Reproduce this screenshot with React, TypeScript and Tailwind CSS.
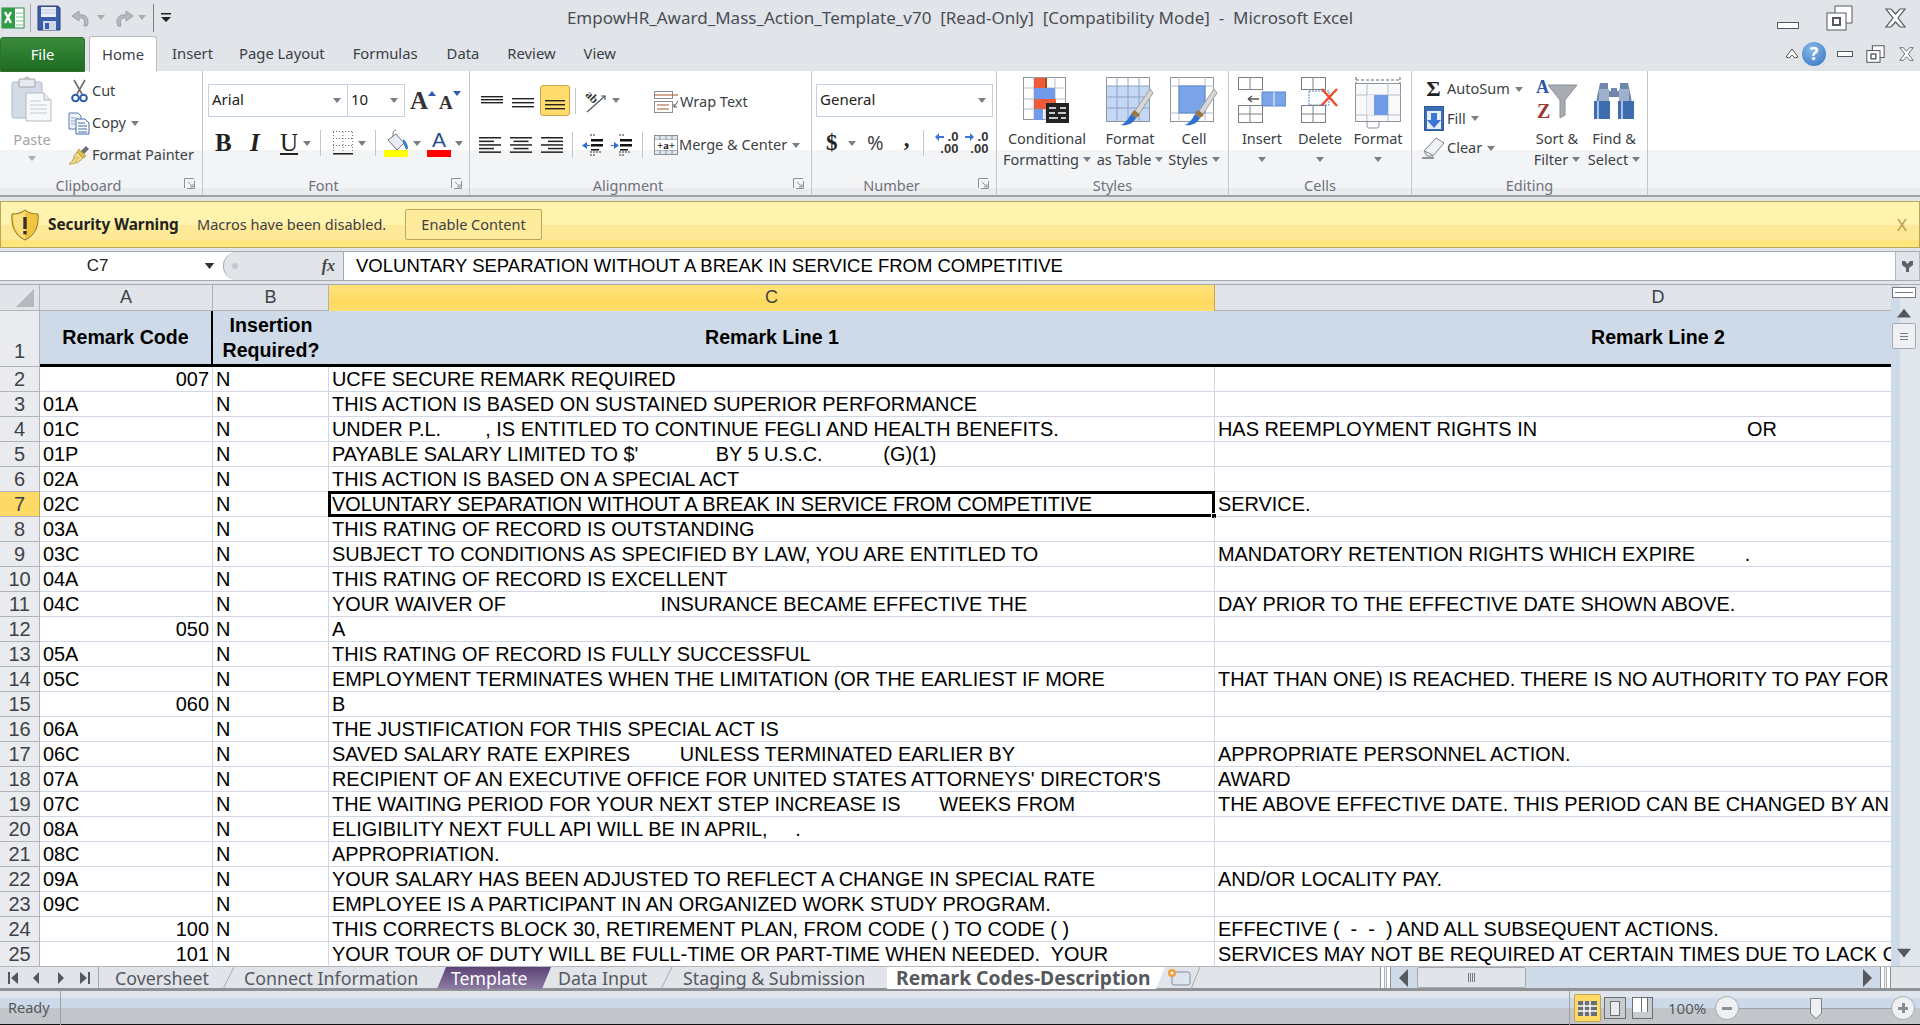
import React from 'react';

const UI = "font-['Noto_Sans',sans-serif]";

// small grey drop-down triangle used all over the ribbon
const Caret = ({ className = '', color = '#7b7e83' }: { className?: string; color?: string }) => (
  <svg width="8" height="5" viewBox="0 0 8 5" className={`shrink-0 ${className}`}>
    <path d="M0 0h8L4 5z" fill={color} />
  </svg>
);

const Launcher = () => (
  <svg width="11" height="11" viewBox="0 0 11 11" className="absolute right-[7px] top-[3px]">
    <path d="M.5 10V.5H10M3 10.5h7.5V3M4 4l5 5M9 6v3H6" fill="none" stroke="#8d9096" />
  </svg>
);

const Lines = ({ rows, w = 22 }: { rows: number[]; w?: number }) => (
  <svg width={w} height="18" viewBox={`0 0 ${w} 18`}>
    {rows.map((y, i) => (
      <rect key={i} x={0} y={y} width={w} height="1.4" fill="#222" />
    ))}
  </svg>
);

const AlignLines = ({ kind }: { kind: 'l' | 'c' | 'r' }) => {
  const widths = [22, 15, 22, 15, 22];
  return (
    <svg width="22" height="18" viewBox="0 0 22 18">
      {widths.map((w, i) => (
        <rect key={i} x={kind === 'l' ? 0 : kind === 'r' ? 22 - w : (22 - w) / 2} y={1 + i * 3.6} width={w} height="1.5" fill="#222" />
      ))}
    </svg>
  );
};

const ExcelIcon = () => (
  <svg width="24" height="24" viewBox="0 0 24 24">
    <rect x="1" y="2" width="22" height="20" fill="#fff" stroke="#2d8a3e" />
    <rect x="1" y="2" width="13" height="20" fill="#2f9c46" />
    <path d="M4 6l6 11M10 6L4 17" stroke="#fff" strokeWidth="2.4" />
    <path d="M15 7h7M15 11h7M15 15h7M15 19h7" stroke="#7cc48a" />
  </svg>
);

const SaveIcon = () => (
  <svg width="24" height="26" viewBox="0 0 24 26">
    <path d="M1 1h20l2 2v22H1z" fill="#3c5ea8" stroke="#28407c" />
    <rect x="4" y="2" width="15" height="10" fill="#e8edf7" />
    <path d="M4 5h15M4 8h15" stroke="#b7c5e0" />
    <rect x="6" y="16" width="13" height="9" fill="#cfd8ea" />
    <rect x="8" y="18" width="4" height="6" fill="#3c5ea8" />
  </svg>
);

const UndoIcon = ({ flip = false }: { flip?: boolean }) => (
  <svg width="20" height="20" viewBox="0 0 20 20" className={flip ? '-scale-x-100' : ''}>
    <path d="M17 18c3-7-1-12-8-11V3L2 8l7 5V10c4-1 7 2 5 8z" fill="#b6b9bd" stroke="#9a9da2" />
  </svg>
);

const ClipboardIcon = () => (
  <svg width="42" height="46" viewBox="0 0 42 46">
    <rect x="1" y="6" width="30" height="36" rx="2" fill="#d3dbe7" stroke="#aeb8c6" />
    <rect x="8" y="3" width="16" height="8" rx="1" fill="#e8e9ec" stroke="#a0a4aa" />
    <path d="M14 3a2 2 0 0 1 4 0" fill="none" stroke="#a0a4aa" />
    <path d="M15 17h18l7 7v21H15z" fill="#f7f8fa" stroke="#b5b9c0" />
    <path d="M33 17v7h7" fill="#e6e8ec" stroke="#b5b9c0" />
    <path d="M19 25h11M19 29h17M19 33h17M19 37h17" stroke="#c7cbd1" />
  </svg>
);

const ScissorsIcon = () => (
  <svg width="17" height="24" viewBox="0 0 17 24">
    <path d="M3 1l8 14M14 1L6 15" stroke="#6a6d72" strokeWidth="1.6" />
    <circle cx="4.5" cy="19" r="3.3" fill="none" stroke="#2d5cae" strokeWidth="2" />
    <circle cx="12.5" cy="19" r="3.3" fill="none" stroke="#2d5cae" strokeWidth="2" />
  </svg>
);

const CopyIcon = () => (
  <svg width="22" height="23" viewBox="0 0 22 23">
    <path d="M1 1h9l3 3v13H1z" fill="#eef1f6" stroke="#5f7fb3" />
    <path d="M8 7h9l4 4v11H8z" fill="#fff" stroke="#3f67a9" />
    <path d="M10 11h7M10 14h9M10 17h9M10 20h9" stroke="#3f67a9" />
    <path d="M3 6h5M3 9h4M3 12h4" stroke="#8da5cb" />
  </svg>
);

const PainterIcon = () => (
  <svg width="22" height="20" viewBox="0 0 22 20">
    <path d="M13 6l5-5 3 3-5 5z" fill="#6d6f74" />
    <path d="M11 4l7 7-3 2-6-6z" fill="#e2c04c" stroke="#9c7f24" strokeWidth=".6" />
    <path d="M9 7l6 6c-3 4-8 6-14 6 3-2 5-5 5-8z" fill="#f2dd8b" stroke="#a48a3a" strokeWidth=".7" />
    <path d="M4 16l5-5M7 17l4-5" stroke="#b79b3f" strokeWidth=".7" />
  </svg>
);

const BorderIcon = () => (
  <svg width="20" height="24" viewBox="0 0 20 24">
    <path d="M.5 1v20M19.5 1v20M10 1v20M0 .5h20M0 7.5h20M0 14.5h20" stroke="#777" strokeDasharray="1 2" fill="none" />
    <rect y="22" width="20" height="1.5" fill="#222" />
  </svg>
);

const FillIcon = () => (
  <svg width="26" height="28" viewBox="0 0 26 28">
    <path d="M12 1c-2 0-3 2-3 4v4" fill="none" stroke="#777" />
    <path d="M4 11l8-6 8 9-7 7z" fill="#e9edf3" stroke="#6f7680" />
    <path d="M19 10c3 2 5 6 5 9 0 2-3 2-3-1l-2-4z" fill="#3c7ed0" />
    <rect y="21" width="24" height="7" fill="#ffff00" />
  </svg>
);

const OrientIcon = () => (
  <svg width="24" height="24" viewBox="0 0 24 24" className="overflow-visible">
    <text x="2" y="11" fontFamily="Liberation Serif, serif" fontWeight="700" fontSize="12" fill="#333" transform="rotate(45 7 7)">ab</text>
    <path d="M3 23L21 7" stroke="#555" strokeWidth="1.2" />
    <path d="M17 7h4v4" fill="none" stroke="#555" strokeWidth="1.2" />
  </svg>
);

const IndentIcon = ({ right = false }: { right?: boolean }) => (
  <svg width="22" height="22" viewBox="0 0 22 22">
    <path d="M8 1h6M8 21h6M8 18h12" stroke="#333" strokeDasharray="2 1" />
    <rect x="9" y="5" width="12" height="2.5" fill="#111" />
    <rect x="9" y="10" width="12" height="2.5" fill="#111" />
    <rect x="9" y="15" width="8" height="1.5" fill="#111" />
    <path d={right ? 'M0 11h3V8l5 3.5L3 15v-3H0z' : 'M8 11H5V8L0 11.5 5 15v-3h3z'} fill="#2f6fd0" />
  </svg>
);

const WrapIcon = () => (
  <svg width="25" height="22" viewBox="0 0 25 22">
    <rect x=".5" y=".5" width="18" height="7" fill="#fff" stroke="#8a8f96" />
    <path d="M0 4h24" stroke="#a9532a" />
    <rect x=".5" y="10.5" width="18" height="11" fill="#fff" stroke="#8a8f96" />
    <path d="M3 14h12M3 18h12" stroke="#a9532a" />
    <path d="M24 10l-4 6M20 13v3h3" fill="none" stroke="#555" />
  </svg>
);

const MergeIcon = () => (
  <svg width="24" height="20" viewBox="0 0 24 20">
    <rect x=".5" y=".5" width="23" height="19" fill="#dfe5ee" stroke="#8b9098" />
    <path d="M0 5h24M0 15h24M6 0v5M12 0v5M18 0v5M6 15v5M12 15v5M18 15v5" stroke="#8b9098" />
    <rect x="1" y="5" width="22" height="10" fill="#fff" />
    <text x="12" y="14" textAnchor="middle" fontFamily="Liberation Serif, serif" fontWeight="700" fontSize="11" fill="#222">+a+</text>
  </svg>
);

const DecimalIcon = ({ more }: { more: boolean }) => (
  <div className="relative w-[23px] h-[24px] font-['Liberation_Sans',sans-serif] text-[13px] leading-[12px] font-bold text-[#333] text-right">
    <svg width="9" height="8" viewBox="0 0 9 8" className="absolute left-0 top-[2px]">
      <path d={more ? 'M0 3h5V0l4 4-4 4V5H0z' : 'M9 3H4V0L0 4l4 4V5h5z'} fill="#3a78d6" />
    </svg>
    <div>.0</div>
    <div>.00</div>
  </div>
);

const CondIcon = () => (
  <svg width="48" height="46" viewBox="0 0 48 46">
    <rect x=".5" y=".5" width="42" height="42" fill="#fff" stroke="#8e949b" />
    <path d="M11 0v43M22 0v43M32 0v43M0 11h43M0 22h43M0 32h43" stroke="#b7bdc5" />
    <rect x="11" y="1" width="11" height="10" fill="#ef5a38" />
    <rect x="22" y="1" width="2" height="10" fill="#a84a1a" />
    <rect x="11" y="11" width="21" height="11" fill="#6f9be8" />
    <rect x="11" y="22" width="22" height="10" fill="#ef5a38" />
    <rect x="11" y="32" width="9" height="11" fill="#6f9be8" />
    <rect x="23" y="26" width="23" height="20" fill="#222" />
    <path d="M26 31h7M37 31h6M26 36h6M35 36h8M26 41h9M38 41h5" stroke="#fff" strokeWidth="1.6" />
  </svg>
);

const TableBrushIcon = ({ cell = false }: { cell?: boolean }) => (
  <svg width="48" height="50" viewBox="0 0 48 50">
    <rect x=".5" y=".5" width="43" height="44" fill="#fff" stroke="#8e949b" />
    {cell ? (
      <>
        <path d="M0 9h44M0 36h44M9 0v45M35 0v45" stroke="#b7bdc5" />
        <rect x="9" y="9" width="26" height="27" fill="#7ba3e8" stroke="#5a85cf" />
      </>
    ) : (
      <>
        <rect x="1" y="9" width="42" height="35" fill="#c4d7f5" />
        <path d="M0 9h44M0 20h44M0 31h44M11 0v45M22 0v45M33 0v45" stroke="#8fa2be" />
      </>
    )}
    <path d="M44 12L29 34l4 3 14-21z" fill="#d8d8d8" stroke="#9b9b9b" />
    <path d="M28 33l6 5-4 3-5-4z" fill="#9d7540" />
    <path d="M25 37l5 4c-3 6-10 8-15 7 4-2 7-5 10-11z" fill="#2f6fd0" />
  </svg>
);

const InsertIcon = () => (
  <svg width="48" height="46" viewBox="0 0 48 46">
    <rect x=".5" y=".5" width="24" height="12" fill="#fff" stroke="#7c8188" />
    <path d="M12 0v13" stroke="#7c8188" />
    <rect x="24" y="15" width="24" height="14" fill="#7ba3e8" stroke="#5a85cf" />
    <path d="M36 15v14" stroke="#fff" />
    <path d="M10 22h11M10 22l4-3M10 22l4 3" stroke="#555" fill="none" strokeWidth="1.4" />
    <rect x=".5" y="28.5" width="24" height="17" fill="#fff" stroke="#7c8188" />
    <path d="M12 28v18M0 37h24" stroke="#7c8188" />
  </svg>
);

const DeleteIcon = () => (
  <svg width="38" height="46" viewBox="0 0 38 46">
    <rect x=".5" y=".5" width="24" height="12" fill="#fff" stroke="#7c8188" />
    <path d="M12 0v13" stroke="#7c8188" />
    <rect x="8" y="14" width="20" height="14" fill="#fff" stroke="#5a85cf" strokeDasharray="2 1" />
    <path d="M21 12l15 17M36 12L20 29" stroke="#ee4b2b" strokeWidth="2.4" />
    <rect x=".5" y="28.5" width="24" height="17" fill="#fff" stroke="#7c8188" />
    <path d="M12 28v18M0 37h24" stroke="#7c8188" />
  </svg>
);

const FormatIcon = () => (
  <svg width="46" height="52" viewBox="0 0 46 52">
    <path d="M1 0v6M45 0v6M1 3h44" stroke="#666" strokeDasharray="3 2" />
    <rect x=".5" y="6.5" width="45" height="38" fill="#f8f9fb" stroke="#8e949b" />
    <path d="M12 6v38M33 6v38M0 18h46M0 38h46" stroke="#b7bdc5" />
    <rect x="12" y="18" width="21" height="20" fill="#f0f3f8" />
    <rect x="19" y="18" width="14" height="20" fill="#6f9be8" />
    <path d="M12 44v5a2 2 0 0 0 2 2h8a2 2 0 0 0 2-2v-4" fill="none" stroke="#8e949b" />
  </svg>
);

const FillDownIcon = () => (
  <svg width="20" height="25" viewBox="0 0 20 25">
    <rect x=".5" y=".5" width="19" height="24" fill="#3d6eb5" stroke="#2f5a98" />
    <rect x="3" y="5" width="14" height="18" fill="#e9eef6" />
    <path d="M7 7h6v7h4l-7 8-7-8h4z" fill="#3c76d6" />
  </svg>
);

const EraserIcon = () => (
  <svg width="23" height="22" viewBox="0 0 23 22">
    <path d="M2 14L14 1l8 5-11 13H5z" fill="#f0f2f5" stroke="#7c8592" />
    <path d="M2 14l7 3 2 2" fill="none" stroke="#7c8592" />
    <path d="M0 21h12" stroke="#333" />
  </svg>
);

const SortIcon = () => (
  <svg width="42" height="46" viewBox="0 0 42 46">
    <path d="M12 8h29L29 23v15l-5 3V23z" fill="#a7acb3" stroke="#8c9197" />
    <text x="0" y="16" fontFamily="Liberation Serif, serif" fontWeight="700" fontSize="18" fill="#2a55a5">A</text>
    <text x="1" y="41" fontFamily="Liberation Serif, serif" fontWeight="700" fontSize="20" fill="#9d3b33">Z</text>
  </svg>
);

const BinocularsIcon = () => (
  <svg width="44" height="44" viewBox="0 0 44 44">
    <path d="M8 6h8v8h3v-3h6v3h3V6h8l3 14 3 22H28V20H16v22H2l3-22z" fill="#6f86ad" />
    <rect x="2" y="24" width="16" height="18" fill="#3f6cae" />
    <rect x="26" y="24" width="16" height="18" fill="#3f6cae" />
    <path d="M6 24v18M30 24v18" stroke="#a9c2e7" strokeWidth="2" />
    <rect x="7" y="12" width="10" height="12" fill="#9db0cc" />
    <rect x="27" y="12" width="10" height="12" fill="#9db0cc" />
  </svg>
);

const WinMin = ({ w, h }: { w: number; h: number }) => (
  <div style={{ width: w, height: h }} className="bg-white border border-[#55585d]" />
);

const WinRestore = ({ big = false }: { big?: boolean }) => (
  <svg width={big ? 27 : 19} height={big ? 26 : 18} viewBox="0 0 27 26">
    <path d="M9 8V1h17v17h-6" fill="#fff" stroke="#55585d" strokeWidth={big ? 1 : 1.5} />
    <rect x="1" y="8" width="19" height="17" fill="#fff" stroke="#55585d" strokeWidth={big ? 1 : 1.5} />
    <rect x="7" y="13" width="7" height="7" fill="none" stroke="#55585d" strokeWidth="2" />
  </svg>
);

const WinClose = ({ big = false }: { big?: boolean }) => (
  <svg width={big ? 23 : 17} height={big ? 20 : 14} viewBox="0 0 23 20">
    <path d="M2 1h5l4.500 5L16 1h5l-7 9 7 9h-5l-4.500-5L7 19H2l7-9z" fill="#fff" stroke="#55585d" strokeWidth="1.2" />
  </svg>
);

const ShieldIcon = () => (
  <svg width="28" height="32" viewBox="0 0 28 32">
    <path d="M14 1c4 3 8 4 13 4 1 11-2 21-13 26C3 26 0 16 1 5c5 0 9-1 13-4z" fill="#f3c33f" stroke="#8b7a35" />
    <path d="M14 2v28C5 25 2 16 2 6c5 0 8-1 12-4z" fill="#fbe07f" />
    <rect x="12.300" y="8" width="3.400" height="12" fill="#333" />
    <rect x="12.300" y="22" width="3.400" height="3.400" fill="#333" />
  </svg>
);

const Small = ({ icon, label, caret, iconW = 26, h = 32 }: { icon: React.ReactNode; label: string; caret?: boolean; iconW?: number; h?: number }) => (
  <div className="flex items-center" style={{ height: h }}>
    <div className="flex justify-center shrink-0" style={{ width: iconW }}>{icon}</div>
    <span className="text-[14.5px] text-[#3b3f46] whitespace-nowrap">{label}</span>
    {caret && <Caret className="ml-[5px]" />}
  </div>
);

const Big = ({ icon, l1, l2, caretOnly, w }: { icon: React.ReactNode; l1: string; l2?: string; caretOnly?: boolean; w: string }) => (
  <div className={`flex flex-col items-center ${w}`}>
    <div className="h-[53px] pt-[6px] flex justify-center">{icon}</div>
    <div className="h-[21px] leading-[21px] text-[14.5px] text-[#3b3f46] whitespace-nowrap mt-[4px]">{l1}</div>
    <div className="h-[21px] flex items-center justify-center text-[14.5px] text-[#3b3f46] whitespace-nowrap">
      {l2}
      {(l2 || caretOnly) && <Caret className={l2 ? 'ml-[4px]' : ''} />}
    </div>
  </div>
);

const Group = ({ label, w, launcher, children }: { label: string; w: string; launcher?: boolean; children: React.ReactNode }) => (
  <div className={`${w} shrink-0 h-full flex flex-col border-r border-[#c2c5ca]`}>
    <div className="h-[104px]">{children}</div>
    <div className={`relative h-[20px] leading-[20px] text-center text-[14.5px] text-[#6e7279] ${launcher ? 'pr-[25px]' : ''}`}>
      {label}
      {launcher && <Launcher />}
    </div>
  </div>
);

const VSep = ({ ml = '' }: { ml?: string }) => <div className={`w-px h-[26px] bg-[#c2c5ca] ${ml}`} />;

const Combo = ({ text, w }: { text: string; w: string }) => (
  <div className={`${w} h-[33px] bg-white border border-[#c3d1e2] flex items-center justify-between pl-[3px] pr-[6px] pb-[3px] text-[15px] text-[#222]`}>
    <span>{text}</span>
    <Caret className="mt-[3px]" />
  </div>
);

const Ribbon = () => (
  <div className="h-[126px] flex border-b-2 border-[#9ea1a6] bg-[linear-gradient(#fff_0,#fff_79px,#f3f4f6_79px,#f3f4f6_117px,#e9ebee_117px)]">
    <Group label="Clipboard" w="w-[203px]" launcher>
      <div className="flex">
        <div className="w-[64px] flex flex-col items-center pt-[5px]">
          <ClipboardIcon />
          <div className="text-[14.5px] text-[#a2a4a8] mt-[7px] leading-[21px]">Paste</div>
          <Caret className="mt-[6px]" color="#a9abaf" />
        </div>
        <div className="pt-[4px] pl-[2px]">
          <Small icon={<ScissorsIcon />} label="Cut" />
          <Small icon={<CopyIcon />} label="Copy" caret />
          <Small icon={<PainterIcon />} label="Format Painter" />
        </div>
      </div>
    </Group>

    <Group label="Font" w="w-[267px]" launcher>
      <div className="pt-[13px] pl-[5px] flex items-center">
        <Combo text="Arial" w="w-[140px]" />
        <Combo text="10" w="w-[58px] -ml-px" />
        <span className="ml-[5px] font-['Liberation_Serif',serif] font-bold text-[25px] leading-none text-[#333]">A</span>
        <svg width="8" height="5" className="mb-[14px]"><path d="M0 5h8L4 0z" fill="#2d5cae" /></svg>
        <span className="ml-[3px] font-['Liberation_Serif',serif] font-bold text-[19px] leading-none text-[#333] mt-[3px]">A</span>
        <svg width="8" height="5" className="mb-[14px]"><path d="M0 0h8L4 5z" fill="#2d5cae" /></svg>
      </div>
      <div className="mt-[12px] h-[28px] flex items-center pl-[12px] font-['Liberation_Serif',serif] text-[#222]">
        <span className="w-[18px] font-bold text-[25px]">B</span>
        <span className="ml-[17px] w-[13px] italic font-bold text-[25px]">I</span>
        <span className="ml-[17px] w-[19px] underline font-normal text-[25px]">U</span>
        <Caret className="ml-[4px]" />
        <VSep ml="ml-[9px]" />
        <div className="ml-[12px]"><BorderIcon /></div>
        <Caret className="ml-[5px]" />
        <VSep ml="ml-[9px]" />
        <div className="ml-[8px]"><FillIcon /></div>
        <Caret className="ml-[3px]" />
        <div className="ml-[6px] w-[24px] flex flex-col items-center">
          <span className="font-['Liberation_Sans',sans-serif] text-[21px] leading-[21px] text-[#2d4f8f]">A</span>
          <div className="w-[24px] h-[7px] bg-[#ff0000]" />
        </div>
        <Caret className="ml-[4px]" />
      </div>
    </Group>

    <Group label="Alignment" w="w-[342px]" launcher>
      <div className="flex">
        <div className="w-[175px]">
          <div className="pt-[13px] pl-[11px] flex items-center h-[46px]">
            <Lines rows={[4, 7, 10]} />
            <div className="ml-[9px]"><Lines rows={[6, 10, 14]} /></div>
            <div className="ml-[6px] w-[30px] h-[31px] rounded-[3px] bg-[#ffdc6b] border border-[#c9a34a] flex items-center justify-center pt-[8px]">
              <Lines rows={[4, 8, 12]} w={20} />
            </div>
            <VSep ml="ml-[5px]" />
            <div className="ml-[8px]"><OrientIcon /></div>
            <Caret className="ml-[4px]" />
          </div>
          <div className="mt-[16px] pl-[9px] flex items-center h-[24px]">
            <AlignLines kind="l" />
            <div className="ml-[9px]"><AlignLines kind="c" /></div>
            <div className="ml-[9px]"><AlignLines kind="r" /></div>
            <VSep ml="ml-[9px]" />
            <div className="ml-[9px]"><IndentIcon /></div>
            <div className="ml-[7px]"><IndentIcon right /></div>
            <VSep ml="ml-[9px]" />
          </div>
        </div>
        <div className="pl-[7px] pt-[15px]">
          <Small icon={<WrapIcon />} label="Wrap Text" iconW={28} h={32} />
          <div className="h-[11px]" />
          <Small icon={<MergeIcon />} label="Merge & Center" caret iconW={27} h={32} />
        </div>
      </div>
    </Group>

    <Group label="Number" w="w-[185px]" launcher>
      <div className="pt-[13px] pl-[4px]">
        <Combo text="General" w="w-[177px]" />
      </div>
      <div className="mt-[12px] h-[28px] flex items-center pl-[14px] text-[#222]">
        <span className="w-[13px] font-['Liberation_Serif',serif] font-bold text-[23px]">$</span>
        <Caret className="ml-[9px]" />
        <span className="ml-[11px] text-[20px] font-['Noto_Sans',sans-serif] text-[#444]">%</span>
        <span className="ml-[20px] font-['Liberation_Serif',serif] font-bold text-[23px] -mt-[8px]">,</span>
        <VSep ml="ml-[14px]" />
        <div className="ml-[11px]"><DecimalIcon more={false} /></div>
        <div className="ml-[7px]"><DecimalIcon more /></div>
      </div>
    </Group>

    <Group label="Styles" w="w-[232px]">
      <div className="flex">
        <Big icon={<CondIcon />} l1="Conditional" l2="Formatting" w="w-[100px]" />
        <Big icon={<TableBrushIcon />} l1="Format" l2="as Table" w="w-[66px]" />
        <Big icon={<TableBrushIcon cell />} l1="Cell" l2="Styles" w="w-[62px]" />
      </div>
    </Group>

    <Group label="Cells" w="w-[183px]">
      <div className="flex">
        <Big icon={<InsertIcon />} l1="Insert" caretOnly w="w-[66px]" />
        <Big icon={<DeleteIcon />} l1="Delete" caretOnly w="w-[50px]" />
        <Big icon={<FormatIcon />} l1="Format" caretOnly w="w-[66px]" />
      </div>
    </Group>

    <Group label="Editing" w="w-[236px]">
      <div className="flex">
        <div className="w-[119px] pl-[8px] pt-[3px]">
          <Small icon={<span className="font-['Liberation_Serif',serif] font-bold text-[22px] leading-none text-[#222]">Σ</span>} label="AutoSum" caret iconW={27} h={30} />
          <Small icon={<FillDownIcon />} label="Fill" caret iconW={27} h={29} />
          <Small icon={<EraserIcon />} label="Clear" caret iconW={27} h={30} />
        </div>
        <Big icon={<SortIcon />} l1="Sort &" l2="Filter" w="w-[52px]" />
        <Big icon={<BinocularsIcon />} l1="Find &" l2="Select" w="w-[62px]" />
      </div>
    </Group>
  </div>
);

type RowData = { n: number; a: string; right?: boolean; c: string; d?: string };

const rows: RowData[] = [
  { n: 2, a: '007', right: true, c: 'UCFE SECURE REMARK REQUIRED' },
  { n: 3, a: '01A', c: 'THIS ACTION IS BASED ON SUSTAINED SUPERIOR PERFORMANCE' },
  { n: 4, a: '01C', c: 'UNDER P.L.        , IS ENTITLED TO CONTINUE FEGLI AND HEALTH BENEFITS.', d: 'HAS REEMPLOYMENT RIGHTS IN                                      OR' },
  { n: 5, a: '01P', c: "PAYABLE SALARY LIMITED TO $'              BY 5 U.S.C.           (G)(1)" },
  { n: 6, a: '02A', c: 'THIS ACTION IS BASED ON A SPECIAL ACT' },
  { n: 7, a: '02C', c: 'VOLUNTARY SEPARATION WITHOUT A BREAK IN SERVICE FROM COMPETITIVE', d: 'SERVICE.' },
  { n: 8, a: '03A', c: 'THIS RATING OF RECORD IS OUTSTANDING' },
  { n: 9, a: '03C', c: 'SUBJECT TO CONDITIONS AS SPECIFIED BY LAW, YOU ARE ENTITLED TO', d: 'MANDATORY RETENTION RIGHTS WHICH EXPIRE         .' },
  { n: 10, a: '04A', c: 'THIS RATING OF RECORD IS EXCELLENT' },
  { n: 11, a: '04C', c: 'YOUR WAIVER OF                            INSURANCE BECAME EFFECTIVE THE', d: 'DAY PRIOR TO THE EFFECTIVE DATE SHOWN ABOVE.' },
  { n: 12, a: '050', right: true, c: 'A' },
  { n: 13, a: '05A', c: 'THIS RATING OF RECORD IS FULLY SUCCESSFUL' },
  { n: 14, a: '05C', c: 'EMPLOYMENT TERMINATES WHEN THE LIMITATION (OR THE EARLIEST IF MORE', d: 'THAT THAN ONE) IS REACHED. THERE IS NO AUTHORITY TO PAY FOR' },
  { n: 15, a: '060', right: true, c: 'B' },
  { n: 16, a: '06A', c: 'THE JUSTIFICATION FOR THIS SPECIAL ACT IS' },
  { n: 17, a: '06C', c: 'SAVED SALARY RATE EXPIRES         UNLESS TERMINATED EARLIER BY', d: 'APPROPRIATE PERSONNEL ACTION.' },
  { n: 18, a: '07A', c: "RECIPIENT OF AN EXECUTIVE OFFICE FOR UNITED STATES ATTORNEYS' DIRECTOR'S", d: 'AWARD' },
  { n: 19, a: '07C', c: 'THE WAITING PERIOD FOR YOUR NEXT STEP INCREASE IS       WEEKS FROM', d: 'THE ABOVE EFFECTIVE DATE. THIS PERIOD CAN BE CHANGED BY AN' },
  { n: 20, a: '08A', c: 'ELIGIBILITY NEXT FULL API WILL BE IN APRIL,     .' },
  { n: 21, a: '08C', c: 'APPROPRIATION.' },
  { n: 22, a: '09A', c: 'YOUR SALARY HAS BEEN ADJUSTED TO REFLECT A CHANGE IN SPECIAL RATE', d: 'AND/OR LOCALITY PAY.' },
  { n: 23, a: '09C', c: 'EMPLOYEE IS A PARTICIPANT IN AN ORGANIZED WORK STUDY PROGRAM.' },
  { n: 24, a: '100', right: true, c: 'THIS CORRECTS BLOCK 30, RETIREMENT PLAN, FROM CODE ( ) TO CODE ( )', d: 'EFFECTIVE (  -  -  ) AND ALL SUBSEQUENT ACTIONS.' },
  { n: 25, a: '101', right: true, c: 'YOUR TOUR OF DUTY WILL BE FULL-TIME OR PART-TIME WHEN NEEDED.  YOUR', d: 'SERVICES MAY NOT BE REQUIRED AT CERTAIN TIMES DUE TO LACK OF' },
];

const cell = 'h-full border-r border-[#d0d7e5] flex items-center shrink-0 overflow-hidden whitespace-pre pt-px';

const Sheet = () => (
  <div className="flex-1 min-w-0 overflow-hidden font-['Liberation_Sans',sans-serif] text-[19.9px] text-black">
    <div className="h-[26px] flex text-[#3e4248] text-[18px] bg-[#e1e4e9] border-b border-[#b0b3b8]">
      <div className="w-[40px] shrink-0 h-full border-r border-[#b0b3b8] relative">
        <svg width="18" height="18" viewBox="0 0 18 18" className="absolute right-[5px] bottom-[3px]"><path d="M18 0v18H0z" fill="#b5b9be" /></svg>
      </div>
      <div className="w-[173px] shrink-0 border-r border-[#b0b3b8] text-center leading-[25px]">A</div>
      <div className="w-[116px] shrink-0 border-r border-[#b0b3b8] text-center leading-[25px]">B</div>
      <div className="w-[886px] shrink-0 border-r border-[#c9a34a] bg-[linear-gradient(#fee37c,#ffd95f_70%,#ffde73)] -mb-px text-center leading-[25px]">C</div>
      <div className="w-[886px] shrink-0 text-center leading-[25px]">D</div>
    </div>
    <div className="h-[56px] flex font-bold text-[19.6px] bg-[#cfdae8] border-b-[3px] border-black">
      <div className="w-[40px] shrink-0 -mb-[3px] bg-[#e9ebee] border-r border-[#b0b3b8] border-b border-b-[#b0b3b8] text-[20px] font-normal text-[#3e4248] flex items-end justify-center">1</div>
      <div className="w-[173px] shrink-0 border-r-2 border-black flex items-center justify-center">Remark Code</div>
      <div className="w-[116px] shrink-0 flex items-center justify-center text-center leading-[25px]">Insertion<br />Required?</div>
      <div className="w-[886px] shrink-0 flex items-center justify-center">Remark Line 1</div>
      <div className="w-[886px] shrink-0 flex items-center justify-center">Remark Line 2</div>
    </div>
    {rows.map((r) => (
      <div key={r.n} className="h-[25px] flex border-b border-[#d0d7e5] bg-white">
        <div className={`w-[40px] h-[25px] shrink-0 border-r text-[20px] flex items-center justify-center ${r.n === 7 ? 'bg-[#ffd966] border-[#c9a34a] text-[#3e4248]' : 'bg-[#e9ebee] border-[#b0b3b8] text-[#3e4248]'} border-b border-b-[#b0b3b8]`}>{r.n}</div>
        <div className={`w-[173px] ${cell} px-[3px] ${r.right ? 'justify-end' : ''}`}>{r.a}</div>
        <div className={`w-[116px] ${cell} px-[3px]`}>N</div>
        <div className={`w-[886px] ${cell} px-[3px] relative ${r.n === 7 ? 'overflow-visible' : ''}`}>
          {r.c}
          {r.n === 7 && (
            <div className="absolute -left-px -top-px -right-px -bottom-px border-[3px] border-black">
              <div className="absolute -right-[5px] -bottom-[5px] w-[6px] h-[6px] bg-black border border-white" />
            </div>
          )}
        </div>
        <div className="flex-1 min-w-0 h-full flex items-center overflow-hidden whitespace-pre px-[3px] pt-px">{r.d}</div>
      </div>
    ))}
  </div>
);

const VScroll = () => (
  <div className="w-[29px] shrink-0 flex flex-col bg-[linear-gradient(90deg,#cfdae8_0,#cfdae8_9px,#dfe6ee_9px,#dfe6ee_25px,#e1e4e9_25px)] relative">
    <div className="h-[11px] mt-[2px] ml-[1px] w-[24px] bg-white border border-[#777b80] flex items-center justify-center">
      <div className="w-[18px] h-px bg-[#777b80]" />
    </div>
    <Caret className="w-[14px] h-[10px] ml-[6px] mt-[10px] rotate-180" color="#55585d" />
    <div className="ml-[1px] mt-[5px] w-[24px] h-[26px] bg-[#eef0f3] border border-[#a6aab0] rounded-[2px] flex flex-col gap-[2px] items-center justify-center">
      <div className="w-[8px] h-px bg-[#777b80]" />
      <div className="w-[8px] h-px bg-[#777b80]" />
      <div className="w-[8px] h-px bg-[#777b80]" />
    </div>
    <div className="flex-1" />
    <Caret className="w-[14px] h-[10px] ml-[6px] mb-[8px]" color="#55585d" />
  </div>
);

const PlainTab = ({ label, w, pl }: { label: string; w: string; pl: string }) => (
  <div className={`${w} ${pl} shrink-0 text-[17.8px] leading-[22px] text-[#55595f] whitespace-nowrap`}>{label}</div>
);

const Slant = () => (
  <svg width="12" height="22" viewBox="0 0 12 22" className="shrink-0"><path d="M12 0L1 22" stroke="#a6aab0" fill="none" /></svg>
);

const SheetTabs = () => (
  <div className="h-[25px] flex items-stretch bg-[#e1e4e9] border-y border-t-[#b4b7bc] border-b-[#8e9196] border-b-[3px]">
    <div className="w-[98px] shrink-0 flex items-center text-[#4b4e53]">
      <svg width="98" height="14" viewBox="0 0 98 14" fill="#53565b">
        <path d="M8 1h2v12H8zM18 1v12l-7-6zM39 1v12l-6-6zM58 1v12l6-6zM80 1v12l7-6zM88 1h2v12h-2z" />
      </svg>
    </div>
    <div className="w-px shrink-0 bg-[#a6aab0]" />
    <PlainTab label="Coversheet" w="w-[123px]" pl="pl-[16px]" />
    <Slant />
    <PlainTab label="Connect Information" w="w-[203px]" pl="pl-[10px]" />
    <div className="w-[114px] shrink-0 h-[22px] pl-[14px] text-white text-[17.6px] leading-[22px] bg-[linear-gradient(#5d4477,#8d7ba3)] [clip-path:polygon(9px_0,100%_0,calc(100%-9px)_100%,0_100%)]">Template</div>
    <PlainTab label="Data Input" w="w-[109px]" pl="pl-[7px]" />
    <Slant />
    <PlainTab label="Staging & Submission" w="w-[215px]" pl="pl-[11px]" />
    <div className="w-[278px] shrink-0 h-[22px] pl-[9px] bg-white font-bold text-[19.3px] leading-[22px] text-[#55585d] whitespace-nowrap [clip-path:polygon(0_0,100%_0,calc(100%-9px)_100%,0_100%)]">Remark Codes-Description</div>
    <svg width="36" height="22" viewBox="0 0 36 22" className="shrink-0 -ml-[1px]">
      <rect x="8" y="5" width="18" height="13" rx="2" fill="#dfe5ee" stroke="#7f8ea6" />
      <circle cx="8" cy="6" r="4" fill="#eea13a" />
      <circle cx="8" cy="6" r="1.500" fill="#fff" />
      <path d="M36 0L27 22" stroke="#a6aab0" fill="none" />
    </svg>
    <div className="flex-1" />
    <div className="w-[11px] bg-white border-x border-[#8e9196] flex justify-center"><div className="w-[3px] bg-[#eef0f3] border-x border-[#b0b3b8]" /></div>
    <div className="w-[500px] shrink-0 flex items-center bg-[#cfdae8]">
      <svg width="9" height="18" viewBox="0 0 9 18" className="ml-[8px]"><path d="M9 0v18L0 9z" fill="#55585d" /></svg>
      <div className="ml-[9px] w-[109px] h-full bg-[#e1e4e9] border border-[#a6aab0] rounded-[2px] flex items-center justify-center gap-[1px]">
        <div className="w-px h-[9px] bg-[#777b80]" /><div className="w-px h-[9px] bg-[#777b80]" /><div className="w-px h-[9px] bg-[#777b80]" /><div className="w-px h-[9px] bg-[#777b80]" />
      </div>
      <div className="flex-1" />
      <svg width="9" height="18" viewBox="0 0 9 18" className="mr-[8px]"><path d="M0 0v18l9-9z" fill="#55585d" /></svg>
      <div className="w-[11px] h-full bg-white border-x border-[#8e9196] flex justify-center"><div className="w-[3px] bg-[#eef0f3] border-x border-[#b0b3b8]" /></div>
    </div>
    <div className="w-[29px] shrink-0" />
  </div>
);

const StatusBar = () => (
  <div className="h-[34px] flex items-center bg-[linear-gradient(#e1e4e9_0,#e1e4e9_2px,#dfe5ec_2px,#dfe5ec_7px,#ccd9e8_7px,#ccd9e8_17px,#c2c5c9_17px,#c2c5c9_33px,#111_33px)] text-[14.5px] text-[#55585d]">
    <div className="w-[61px] h-full flex items-center pl-[8px] border-r border-[#9ea1a6]">Ready</div>
    <div className="flex-1" />
    <div className="w-px h-full bg-[#9ea1a6]" />
    <div className="ml-[4px] w-[27px] h-[28px] rounded-[2px] bg-[#ffd966] border border-[#c9a34a] flex items-center justify-center">
      <svg width="19" height="15" viewBox="0 0 19 15"><rect width="19" height="15" fill="#6b6e73" /><path d="M6 0v15M12 0v15M0 5h19M0 10h19" stroke="#fff" strokeWidth="1.4" /></svg>
    </div>
    <div className="ml-[3px] w-[22px] h-[22px] border border-[#6b6e73] bg-[#c9cccf] flex items-center justify-center">
      <div className="w-[10px] h-[15px] border border-[#6b6e73] bg-[#e9ebee]" />
    </div>
    <div className="ml-[6px] w-[21px] h-[22px] border border-[#6b6e73] bg-[#c9cccf] flex">
      <div className="w-[9px] h-[14px] bg-white border-r border-[#6b6e73]" />
      <div className="w-[6px] h-[14px] bg-white border-r border-[#6b6e73]" />
    </div>
    <div className="ml-[15px] w-[40px] text-[15px]">100%</div>
    <div className="ml-[7px] w-[24px] h-[24px] rounded-full bg-[#eef0f3] border border-[#a6aab0] flex items-center justify-center"><div className="w-[10px] h-[3px] bg-[#8a8d92]" /></div>
    <div className="w-[71px] h-px bg-[#9ea1a6]" />
    <svg width="12" height="21" viewBox="0 0 12 21"><path d="M.5.5h11v15l-5.500 5-5.500-5z" fill="#eef0f3" stroke="#7c8086" /></svg>
    <div className="w-[69px] h-px bg-[#9ea1a6]" />
    <div className="w-[24px] h-[24px] rounded-full bg-[#eef0f3] border border-[#a6aab0] flex items-center justify-center relative">
      <div className="w-[10px] h-[3px] bg-[#8a8d92]" />
      <div className="absolute w-[3px] h-[10px] bg-[#8a8d92]" />
    </div>
    <div className="w-[5px]" />
  </div>
);

export default function App() {
  return (
    <div className={`w-[1920px] h-[1025px] overflow-hidden flex flex-col bg-[#e1e4e9] ${UI}`}>
      {/* title bar */}
      <div className="h-[35px] shrink-0 flex items-center">
        <div className="w-[400px] flex items-center pl-px">
          <ExcelIcon />
          <div className="w-px h-[28px] bg-[#a6aab0] ml-[5px]" />
          <div className="ml-[6px]"><SaveIcon /></div>
          <div className="ml-[9px]"><UndoIcon /></div>
          <Caret className="ml-[7px]" color="#a9abaf" />
          <div className="ml-[10px]"><UndoIcon flip /></div>
          <Caret className="ml-[3px]" color="#a9abaf" />
          <div className="w-px h-[28px] bg-[#7c8086] ml-[7px]" />
          <svg width="10" height="9" viewBox="0 0 10 9" className="ml-[7px]"><path d="M0 0h10v1.500H0zM0 4h10L5 9z" fill="#222" /></svg>
        </div>
        <div className="flex-1 text-center text-[17px] text-[#4a4e54] whitespace-pre">EmpowHR_Award_Mass_Action_Template_v70  [Read-Only]  [Compatibility Mode]  -  Microsoft Excel</div>
        <div className="w-[400px] flex items-center justify-end">
          <div className="mt-[15px]"><WinMin w={22} h={7} /></div>
          <div className="ml-[27px]"><WinRestore big /></div>
          <div className="ml-[31px] mr-[13px]"><WinClose big /></div>
        </div>
      </div>

      {/* ribbon tabs */}
      <div className="h-[36px] shrink-0 flex items-end text-[14.8px] text-[#3b3f46] relative z-10">
        <div className="w-[85px] h-[35px] -mb-px rounded-t-[3px] bg-[linear-gradient(#3b8a3c,#2a7a2d_55%,#1f6a22)] border border-[#2f6e30] text-white flex items-center justify-center">File</div>
        <div className="ml-[4px] w-[68px] h-[36px] -mb-px rounded-t-[3px] bg-white border border-b-0 border-[#b9bcc1] flex items-center justify-center">Home</div>
        <div className="h-[35px] flex items-center">
          <span className="ml-[15px]">Insert</span>
          <span className="ml-[26px]">Page Layout</span>
          <span className="ml-[28px]">Formulas</span>
          <span className="ml-[29px]">Data</span>
          <span className="ml-[28px]">Review</span>
          <span className="ml-[28px]">View</span>
        </div>
        <div className="flex-1" />
        <div className="h-[35px] flex items-center">
          <svg width="14" height="11" viewBox="0 0 14 11"><path d="M1 9l6-8 6 8-3 1-3-3-3 3z" fill="#fff" stroke="#55585d" /></svg>
          <div className="ml-[3px] w-[24px] h-[24px] rounded-full bg-[radial-gradient(circle_at_40%_30%,#8ab8e8,#2f72c0)] text-white font-bold text-[18px] flex items-center justify-center">?</div>
          <div className="ml-[11px]"><WinMin w={16} h={6} /></div>
          <div className="ml-[13px]"><WinRestore /></div>
          <div className="ml-[13px] mr-[5px]"><WinClose /></div>
        </div>
      </div>

      <Ribbon />
      <div className="h-[4px] shrink-0" />

      {/* macro warning */}
      <div className="h-[47px] shrink-0 flex items-center border border-[#b7a75d] bg-[linear-gradient(#fff3ae_0,#fff3ae_23px,#fee998_23px,#fee998_38px,#ffe67c_38px)] text-[#3b3f46] text-[14.5px]">
        <div className="ml-[10px]"><ShieldIcon /></div>
        <span className="ml-[9px] w-[149px] font-bold text-[15.3px] text-[#222]">Security Warning</span>
        <span className="w-[208px]">Macros have been disabled.</span>
        <div className="w-[137px] h-[31px] rounded-[2px] border border-[#b7a75d] bg-[#ffeb9c] flex items-center justify-center">Enable Content</div>
        <div className="flex-1" />
        <span className="mr-[12px] text-[#b59a4a] text-[17px] leading-none">X</span>
      </div>
      <div className="h-[3px] shrink-0" />

      {/* formula bar */}
      <div className="h-[30px] shrink-0 flex bg-white border-y border-[#a6aab0]">
        <div className="w-[223px] flex items-center relative">
          <span className="w-[195px] text-center font-['Liberation_Sans',sans-serif] text-[17px] text-[#222]">C7</span>
          <Caret className="ml-[9px] w-[11px] h-[6px]" color="#333" />
        </div>
        <div className="w-[121px] rounded-l-[14px] bg-[#e1e4e9] border-l border-[#a6aab0] border-r flex items-center relative">
          <div className="ml-[8px] w-[6px] h-[6px] rounded-full bg-[#c4c7cc]" />
          <span className="absolute right-[8px] italic font-bold font-['Liberation_Serif',serif] text-[16px] text-[#444]">fx</span>
        </div>
        <div className="flex-1 pl-[12px] flex items-center font-['Liberation_Sans',sans-serif] text-[18.5px] text-black">VOLUNTARY SEPARATION WITHOUT A BREAK IN SERVICE FROM COMPETITIVE</div>
        <div className="w-[25px] bg-[#e1e4e9] border-x border-[#b4b7bc] flex items-center justify-center">
          <svg width="11" height="11" viewBox="0 0 11 11"><path d="M0 0h3l2.500 3L8 0h3v4L7 7v4H4V7L0 4z" fill="#5f6267" /></svg>
        </div>
      </div>
      <div className="h-[3px] shrink-0" />

      {/* sheet */}
      <div className="h-[682px] shrink-0 flex border-t border-[#a6aab0] overflow-hidden">
        <Sheet />
        <VScroll />
      </div>
      <SheetTabs />
      <StatusBar />
    </div>
  );
}
